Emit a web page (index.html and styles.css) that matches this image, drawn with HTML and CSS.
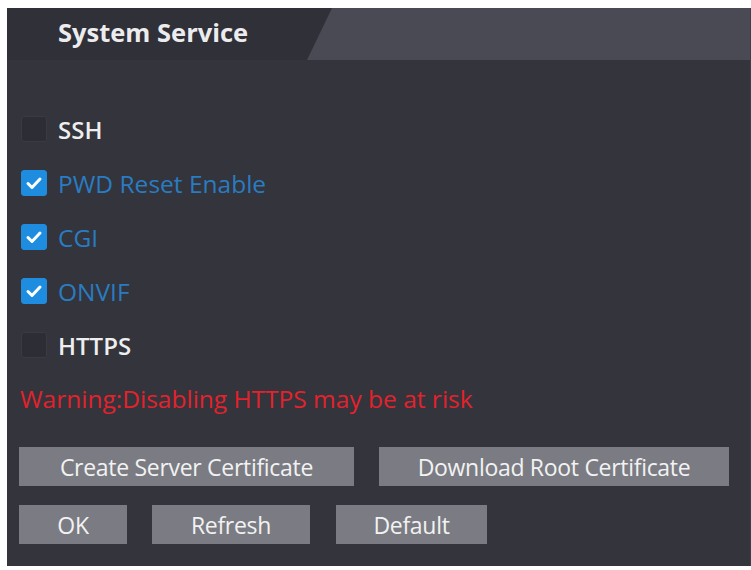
FILE: index.html
```html
<!DOCTYPE html>
<html lang="en">
<head>
    <meta charset="UTF-8">
    <title>System Service</title>
    <link rel="stylesheet" href="styles.css">
</head>
<body>
    <div class="panel">
        <div class="header">
            <div class="tab">System Service</div>
        </div>
        <div class="content">
            <label class="row">
                <span class="box"></span>
                <span class="label">SSH</span>
            </label>
            <label class="row checked">
                <span class="box">
                    <svg viewBox="0 0 26 26" width="26" height="26"><path d="M7 13.5l4 4 8-8.5" fill="none" stroke="#fff" stroke-width="3" stroke-linecap="round" stroke-linejoin="round"/></svg>
                </span>
                <span class="label">PWD Reset Enable</span>
            </label>
            <label class="row checked">
                <span class="box">
                    <svg viewBox="0 0 26 26" width="26" height="26"><path d="M7 13.5l4 4 8-8.5" fill="none" stroke="#fff" stroke-width="3" stroke-linecap="round" stroke-linejoin="round"/></svg>
                </span>
                <span class="label">CGI</span>
            </label>
            <label class="row checked">
                <span class="box">
                    <svg viewBox="0 0 26 26" width="26" height="26"><path d="M7 13.5l4 4 8-8.5" fill="none" stroke="#fff" stroke-width="3" stroke-linecap="round" stroke-linejoin="round"/></svg>
                </span>
                <span class="label">ONVIF</span>
            </label>
            <label class="row">
                <span class="box"></span>
                <span class="label">HTTPS</span>
            </label>
            <div class="warning">Warning:Disabling HTTPS may be at risk</div>

            <div class="btn-row">
                <button class="btn wide-1">Create Server Certificate</button>
                <button class="btn wide-2">Download Root Certificate</button>
            </div>
            <div class="btn-row second">
                <button class="btn ok">OK</button>
                <button class="btn refresh">Refresh</button>
                <button class="btn default">Default</button>
            </div>
        </div>
    </div>
</body>
</html>
```

FILE: styles.css
```css
body {
    margin: 0;
    padding: 8px 0 0 7px;
    background: #fff;
    font-family: 'Open Sans', 'Noto Sans', sans-serif;
}
.panel {
    width: 744px;
    height: 558px;
    background: #33343c;
    border-right: 1px solid #3e3f47;
    box-sizing: border-box;
}
.header {
    height: 52px;
    background: #4a4a55;
}
.tab {
    width: 325px;
    height: 52px;
    background: #2f3038;
    clip-path: polygon(0 0, 100% 0, calc(100% - 25px) 100%, 0 100%);
    color: #ececef;
    font-weight: bold;
    font-size: 25.5px;
    line-height: 48px;
    padding-left: 51px;
    box-sizing: border-box;
}
.content {
    padding: 42px 0 0 14px;
}
.row {
    display: flex;
    align-items: center;
    height: 54px;
    gap: 11px;
}
.box {
    width: 26px;
    height: 26px;
    border-radius: 3px;
    background: #2d2e35;
    border: 1px solid #393a42;
    box-sizing: border-box;
    display: flex;
}
.label {
    font-size: 24px;
    color: #eeeeee;
    font-weight: 600;
}
.row.checked .box {
    background: #1e8de0;
    border-color: #1e8de0;
}
.row.checked .box svg {
    margin: -1px;
}
.row.checked .label {
    color: #2a7cc2;
    font-weight: normal;
    font-size: 24.5px;
}
.warning {
    height: 54px;
    line-height: 54px;
    color: #e3222c;
    font-size: 24.5px;
    margin-left: -1px;
}
.btn-row {
    display: flex;
    margin-top: 21px;
    margin-left: -2px;
}
.btn-row.second {
    margin-top: 19px;
}
.btn {
    height: 39px;
    background: #7b7c83;
    color: #f2f2f2;
    border: none;
    font-family: 'Open Sans', sans-serif;
    font-size: 23px;
    letter-spacing: -0.3px;
    padding: 0;
}
.wide-1 { width: 335px; }
.wide-2 { width: 350px; margin-left: 25px; }
.ok { width: 108px; }
.refresh { width: 158px; margin-left: 25px; }
.default { width: 151px; margin-left: 26px; }
```
